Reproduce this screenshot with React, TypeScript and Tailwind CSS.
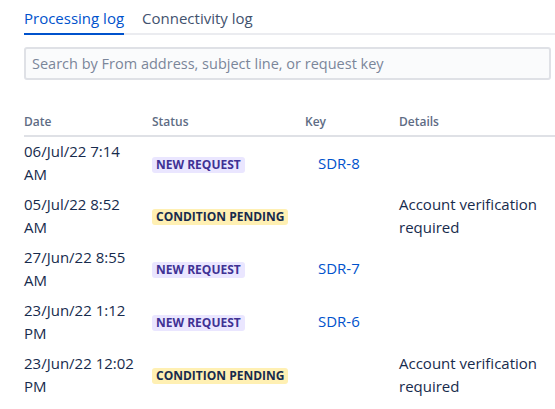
import React from 'react';

type Row = {
  date: string;
  status: 'new' | 'pending';
  issueKey?: string;
  details?: string;
};

const rows: Row[] = [
  { date: '06/Jul/22 7:14 AM', status: 'new', issueKey: 'SDR-8' },
  { date: '05/Jul/22 8:52 AM', status: 'pending', details: 'Account verification required' },
  { date: '27/Jun/22 8:55 AM', status: 'new', issueKey: 'SDR-7' },
  { date: '23/Jun/22 1:12 PM', status: 'new', issueKey: 'SDR-6' },
  { date: '23/Jun/22 12:02 PM', status: 'pending', details: 'Account verification required' },
];

function Lozenge({ status }: { status: Row['status'] }) {
  if (status === 'new') {
    return (
      <span className="inline-block rounded-[3px] bg-[#eae6ff] px-[4px] text-[12px] font-bold uppercase leading-[16px] text-[#403294]">
        New request
      </span>
    );
  }
  return (
    <span className="inline-block rounded-[3px] bg-[#fff0b3] px-[4px] text-[12px] font-bold uppercase leading-[16px] text-[#172b4d]">
      Condition pending
    </span>
  );
}

export default function App() {
  return (
    <div
      className="min-h-screen w-[555px] overflow-hidden bg-white pl-[24px] text-[#172b4d]"
      style={{ fontFamily: '"Open Sans", "Noto Sans", sans-serif' }}
    >
      <div className="flex h-[35px] items-end gap-[18px] border-b-2 border-[#ebecf0] text-[15px] font-medium">
        <button className="-mb-[2px] border-b-2 border-[#0052cc] pb-[5px] leading-[20px] text-[#0052cc]">
          Processing log
        </button>
        <button className="-mb-[2px] border-b-2 border-transparent pb-[5px] leading-[20px] text-[#42526e]">
          Connectivity log
        </button>
      </div>

      <div className="mt-[12px] pr-[4px]">
        <input
          className="h-[33px] w-full rounded-[3px] border-2 border-[#dfe1e6] bg-[#fafbfc] px-[6px] text-[14.5px] text-[#172b4d] outline-none placeholder:text-[#7a869a]"
          placeholder="Search by From address, subject line, or request key"
        />
      </div>

      <table className="mt-[33px] w-[531px] table-fixed border-collapse text-left">
        <colgroup>
          <col className="w-[128px]" />
          <col className="w-[153px]" />
          <col className="w-[94px]" />
          <col />
        </colgroup>
        <thead>
          <tr className="border-b-2 border-[#dfe1e6] text-[12px] text-[#5e6c84]">
            <th className="pb-[4px] font-semibold leading-[18px]">Date</th>
            <th className="pb-[4px] font-semibold leading-[18px]">Status</th>
            <th className="pb-[4px] font-semibold leading-[18px]">Key</th>
            <th className="pb-[4px] font-semibold leading-[18px]">Details</th>
          </tr>
        </thead>
        <tbody className="text-[15px] leading-[23px]">
          {rows.map((r, i) => (
            <tr key={i} className="h-[53px] align-middle">
              <td className="pr-[12px]">{r.date}</td>
              <td>
                <Lozenge status={r.status} />
              </td>
              <td className="pl-[13px]">
                {r.issueKey && <a className="text-[#0052cc]">{r.issueKey}</a>}
              </td>
              <td className="pr-[8px]">{r.details}</td>
            </tr>
          ))}
        </tbody>
      </table>
    </div>
  );
}
